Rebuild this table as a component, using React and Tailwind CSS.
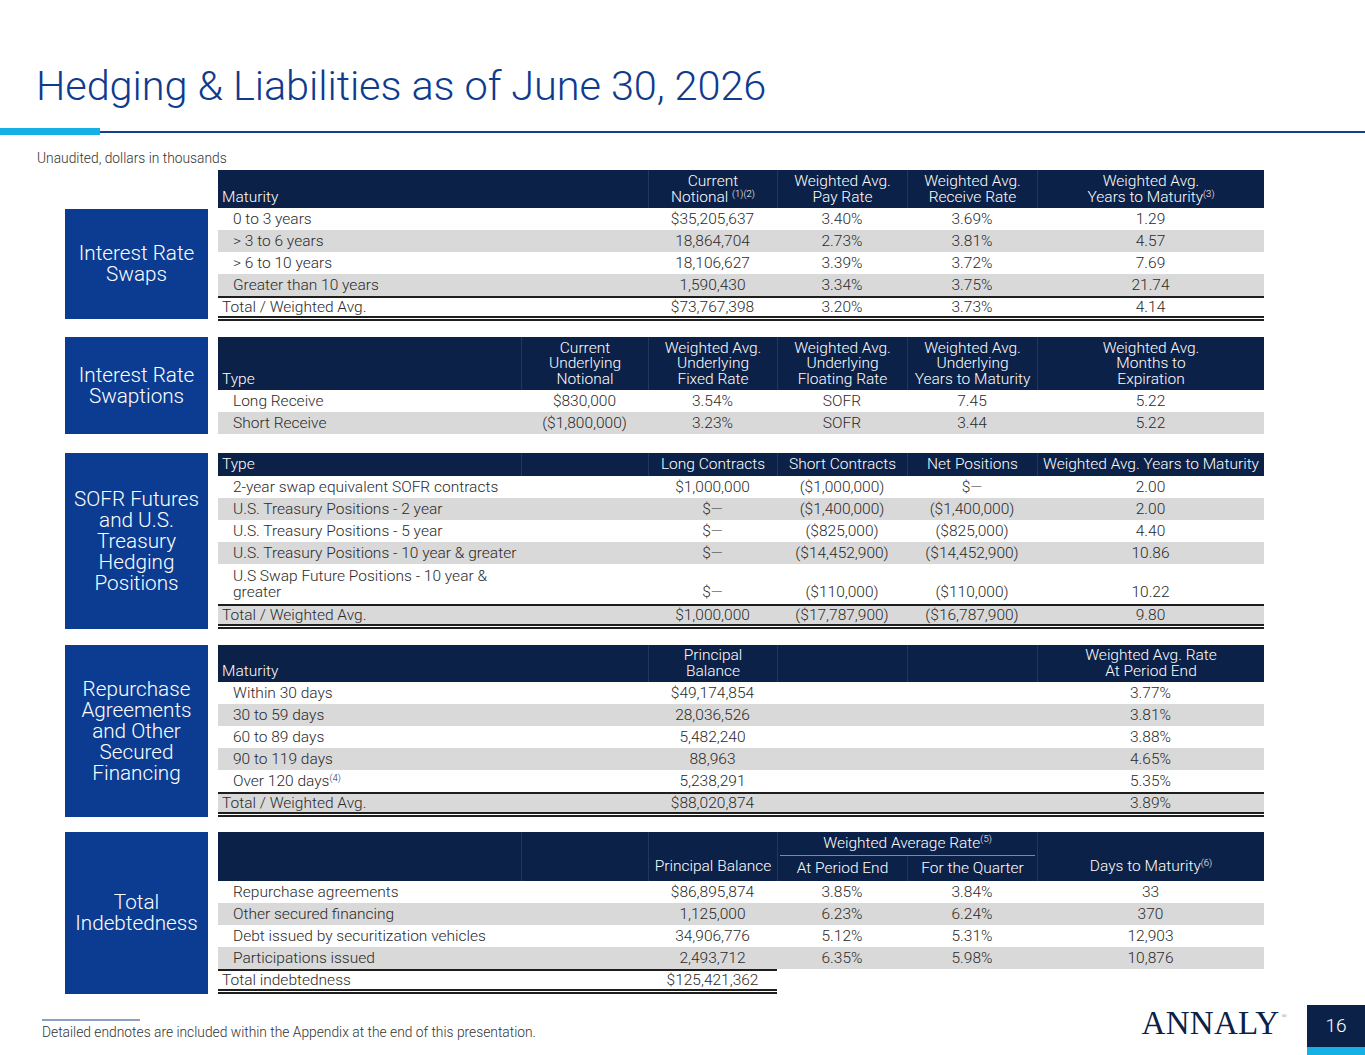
import React from 'react';

const COLS = 'grid grid-cols-[303px_127px_129px_130px_130px_227px]';
const NAVY = 'bg-[#0c2148]';
const GRAY = 'bg-[#d9d9d9]';

// ---- header cell ----
function H({ children, left, span = '', first }) {
  return (
    <div
      className={`flex items-end pb-[3px] leading-[15.5px] text-white ${span} ${
        left ? 'justify-start pl-[4px] text-left' : 'justify-center text-center'
      } ${first ? '' : 'border-l border-white/10'}`}
    >
      <div>{children}</div>
    </div>
  );
}

// ---- body row ----
function Row({ cells, gray, spans = [], tall }) {
  return (
    <div className={`${COLS} ${gray ? GRAY : ''} ${tall ? 'h-[40px]' : 'h-[22px]'}`}>
      {cells.map((c, i) => (
        <div
          key={i}
          className={`${spans[i] || ''} flex ${tall ? 'items-end pb-[4px] leading-[15.5px]' : 'items-center leading-[22px]'} ${
            i === 0 ? 'justify-start pl-[15px] text-left whitespace-nowrap' : 'justify-center text-center whitespace-nowrap'
          }`}
        >
          <div>{c}</div>
        </div>
      ))}
    </div>
  );
}

function TotalRow({ cells, gray, spans = [], narrow }) {
  return (
    <div className={`${narrow ? 'w-[559px]' : ''} border-b-[5px] border-double border-[#1e1e1e]`}>
      <div
        className={`${narrow ? 'grid grid-cols-[303px_127px_129px]' : COLS} h-[20px] border-t-2 border-[#1e1e1e] ${gray ? GRAY : ''}`}
      >
        {cells.map((c, i) => (
          <div
            key={i}
            className={`${spans[i] || ''} flex items-center leading-[18px] whitespace-nowrap ${
              i === 0 ? 'justify-start pl-[4px]' : 'justify-center'
            }`}
          >
            {c}
          </div>
        ))}
      </div>
    </div>
  );
}

function Section({ label, children, boxClass = 'self-stretch', className = '' }) {
  return (
    <div className={`flex gap-[10px] pl-[65px] ${className}`}>
      <div
        className={`w-[143px] shrink-0 bg-[#0b3c91] flex items-center justify-center text-center text-white text-[20.7px] leading-[21px] ${boxClass}`}
      >
        <div>{label}</div>
      </div>
      <div className="w-[1046px] text-[15.5px] text-[#2a2a2a]">{children}</div>
    </div>
  );
}

const Sup = ({ children }) => <sup className="text-[9.5px]">{children}</sup>;

export default function App() {
  return (
    <div className="w-[1365px] h-[1055px] bg-white overflow-hidden font-['Roboto','Liberation_Sans',sans-serif] font-light">
      {/* ---- Title ---- */}
      <div className="h-[128px] pt-[62px] pl-[36px]">
        <h1 className="text-[41.5px] leading-[48px] text-[#0e3b8e] tracking-[-0.1px]">
          Hedging &amp; Liabilities as of June 30, 2026
        </h1>
      </div>
      <div className="flex items-center h-[7px]">
        <div className="w-[100px] h-[7px] bg-[#15b1e6]" />
        <div className="flex-1 h-[2px] bg-[#163e8c]" />
      </div>
      <div className="pt-[15px] pl-[37px] text-[13.8px] leading-[16px] text-[#333]">
        Unaudited, dollars in thousands
      </div>

      {/* ---- Interest Rate Swaps ---- */}
      <Section label={<>Interest Rate<br />Swaps</>} boxClass="mt-[39px] h-[110px]" className="mt-[4px] items-start">
        <div className={`${COLS} ${NAVY} h-[38px]`}>
          <H left first span="col-span-2">Maturity</H>
          <H>Current<br />Notional <Sup>(1)(2)</Sup></H>
          <H>Weighted Avg.<br />Pay Rate</H>
          <H>Weighted Avg.<br />Receive Rate</H>
          <H>Weighted Avg.<br />Years to Maturity<Sup>(3)</Sup></H>
        </div>
        {[
          ['0 to 3 years', '$35,205,637', '3.40%', '3.69%', '1.29'],
          ['> 3 to 6 years', '18,864,704', '2.73%', '3.81%', '4.57'],
          ['> 6 to 10 years', '18,106,627', '3.39%', '3.72%', '7.69'],
          ['Greater than 10 years', '1,590,430', '3.34%', '3.75%', '21.74'],
        ].map((r, i) => (
          <Row key={i} cells={r} gray={i % 2 === 1} spans={['col-span-2']} />
        ))}
        <TotalRow cells={['Total / Weighted Avg.', '$73,767,398', '3.20%', '3.73%', '4.14']} spans={['col-span-2']} />
      </Section>

      {/* ---- Interest Rate Swaptions ---- */}
      <Section label={<>Interest Rate<br />Swaptions</>} className="mt-[16px]">
        <div className={`${COLS} ${NAVY} h-[53px]`}>
          <H left first>Type</H>
          <H>Current<br />Underlying<br />Notional</H>
          <H>Weighted Avg.<br />Underlying<br />Fixed Rate</H>
          <H>Weighted Avg.<br />Underlying<br />Floating Rate</H>
          <H>Weighted Avg.<br />Underlying<br />Years to Maturity</H>
          <H>Weighted Avg.<br />Months to<br />Expiration</H>
        </div>
        <Row cells={['Long Receive', '$830,000', '3.54%', 'SOFR', '7.45', '5.22']} />
        <Row cells={['Short Receive', '($1,800,000)', '3.23%', 'SOFR', '3.44', '5.22']} gray />
      </Section>

      {/* ---- SOFR Futures ---- */}
      <Section label={<>SOFR Futures<br />and U.S.<br />Treasury<br />Hedging<br />Positions</>} className="mt-[19px]">
        <div className={`${COLS} ${NAVY} h-[23px]`}>
          <div className="flex items-center pl-[4px] text-white">Type</div>
          <div className="border-l border-white/10" />
          <div className="flex items-center justify-center text-white border-l border-white/10 whitespace-nowrap">Long Contracts</div>
          <div className="flex items-center justify-center text-white border-l border-white/10 whitespace-nowrap">Short Contracts</div>
          <div className="flex items-center justify-center text-white border-l border-white/10 whitespace-nowrap">Net Positions</div>
          <div className="flex items-center justify-center text-white border-l border-white/10 whitespace-nowrap">Weighted Avg. Years to Maturity</div>
        </div>
        <Row cells={['2-year swap equivalent SOFR contracts', '', '$1,000,000', '($1,000,000)', '$—', '2.00']} />
        <Row cells={['U.S. Treasury Positions - 2 year', '', '$—', '($1,400,000)', '($1,400,000)', '2.00']} gray />
        <Row cells={['U.S. Treasury Positions - 5 year', '', '$—', '($825,000)', '($825,000)', '4.40']} />
        <Row cells={['U.S. Treasury Positions - 10 year & greater', '', '$—', '($14,452,900)', '($14,452,900)', '10.86']} gray />
        <Row
          tall
          cells={[<>U.S Swap Future Positions - 10 year &amp;<br />greater</>, '', '$—', '($110,000)', '($110,000)', '10.22']}
        />
        <TotalRow gray cells={['Total / Weighted Avg.', '', '$1,000,000', '($17,787,900)', '($16,787,900)', '9.80']} />
      </Section>

      {/* ---- Repurchase Agreements ---- */}
      <Section label={<>Repurchase<br />Agreements<br />and Other<br />Secured<br />Financing</>} className="mt-[16px]">
        <div className={`${COLS} ${NAVY} h-[37px]`}>
          <H left first span="col-span-2">Maturity</H>
          <H>Principal<br />Balance</H>
          <H />
          <H />
          <H>Weighted Avg. Rate<br />At Period End</H>
        </div>
        {[
          ['Within 30 days', '$49,174,854', '', '', '3.77%'],
          ['30 to 59 days', '28,036,526', '', '', '3.81%'],
          ['60 to 89 days', '5,482,240', '', '', '3.88%'],
          ['90 to 119 days', '88,963', '', '', '4.65%'],
          [<>Over 120 days<Sup>(4)</Sup></>, '5,238,291', '', '', '5.35%'],
        ].map((r, i) => (
          <Row key={i} cells={r} gray={i % 2 === 1} spans={['col-span-2']} />
        ))}
        <TotalRow gray cells={['Total / Weighted Avg.', '$88,020,874', '', '', '3.89%']} spans={['col-span-2']} />
      </Section>

      {/* ---- Total Indebtedness ---- */}
      <Section label={<>Total<br />Indebtedness</>} className="mt-[15px]">
        <div className={`${COLS} ${NAVY} grid-rows-[24px_25px] text-white`}>
          <div className="row-span-2" />
          <div className="row-span-2 border-l border-white/10" />
          <div className="row-span-2 border-l border-white/10 flex items-end justify-center pb-[3px] whitespace-nowrap">
            Principal Balance
          </div>
          <div className="col-span-2 flex items-center justify-center border-l border-white/10">
            <div className="w-full h-full flex items-center justify-center border-b border-[#6d8cc0] mx-[2px]">
              Weighted Average Rate<Sup>(5)</Sup>
            </div>
          </div>
          <div className="row-span-2 border-l border-white/10 flex items-end justify-center pb-[3px]">
            <div>Days to Maturity<Sup>(6)</Sup></div>
          </div>
          <div className="flex items-center justify-center border-l border-white/10 whitespace-nowrap">At Period End</div>
          <div className="flex items-center justify-center border-l border-white/10 whitespace-nowrap">For the Quarter</div>
        </div>
        <Row cells={['Repurchase agreements', '', '$86,895,874', '3.85%', '3.84%', '33']} />
        <Row cells={['Other secured financing', '', '1,125,000', '6.23%', '6.24%', '370']} gray />
        <Row cells={['Debt issued by securitization vehicles', '', '34,906,776', '5.12%', '5.31%', '12,903']} />
        <Row cells={['Participations issued', '', '2,493,712', '6.35%', '5.98%', '10,876']} gray />
        <TotalRow narrow cells={['Total indebtedness', '', '$125,421,362']} />
      </Section>

      {/* ---- Footer ---- */}
      <div className="mt-[11px] h-[50px] flex justify-between">
        <div className="pl-[42px] pt-[14px]">
          <div className="w-[98px] h-[2px] bg-[#8c9fc4]" />
          <div className="mt-[3px] text-[13.8px] leading-[16px] text-[#333]">
            Detailed endnotes are included within the Appendix at the end of this presentation.
          </div>
        </div>
        <div className="flex items-start">
          <div className="mt-[2px] mr-[20px] flex items-start font-['Liberation_Serif',serif] font-normal text-[33px] leading-[33px] text-[#0c2148] tracking-[0.3px]">
            ANNALY
            <span className="text-[7px] leading-[7px] mt-[6px] ml-[2px] text-[#888]">®</span>
          </div>
          <div className="w-[58px] h-[50px] flex flex-col">
            <div className={`${NAVY} h-[42px] flex items-center justify-center text-white text-[19px]`}>16</div>
            <div className="h-[8px] bg-[#15b1e6]" />
          </div>
        </div>
      </div>
    </div>
  );
}
